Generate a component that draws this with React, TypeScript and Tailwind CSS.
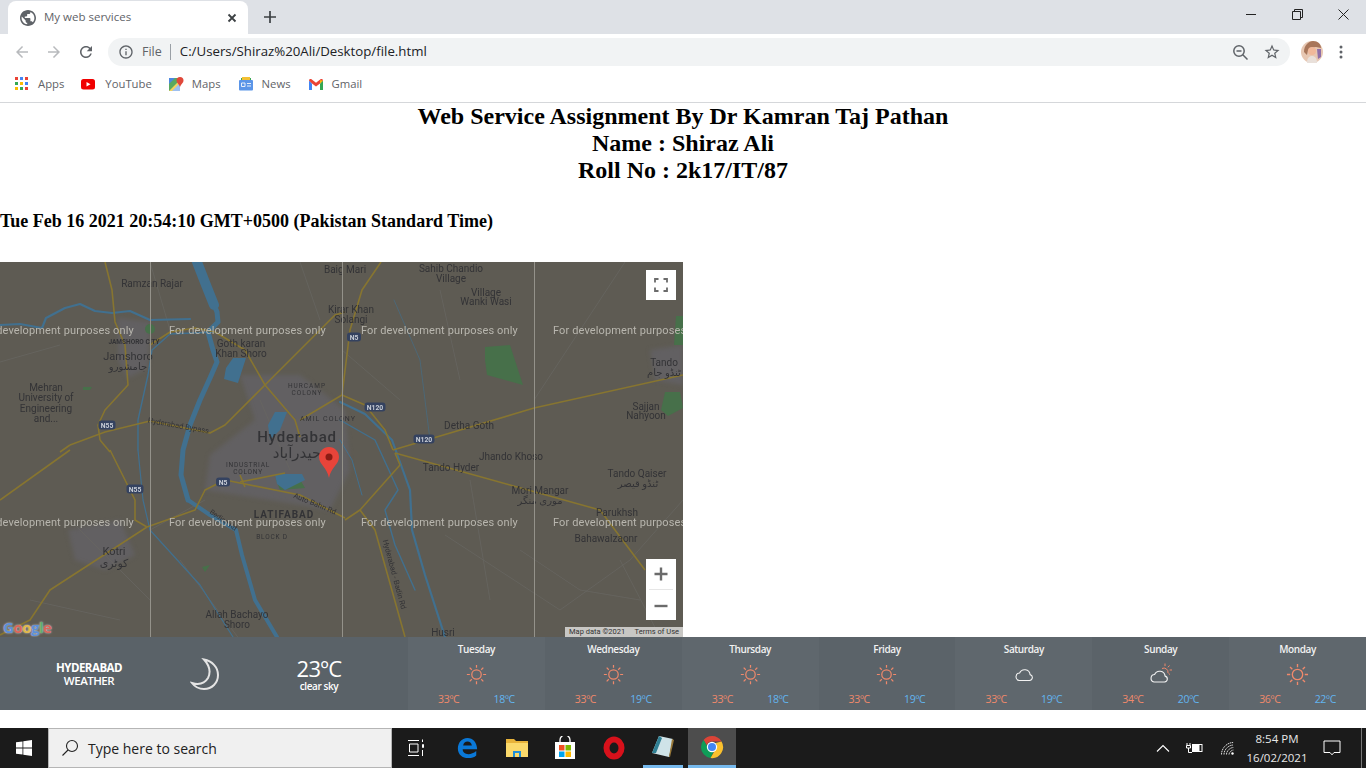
// App.tsx
import React from "react";

type Label = { t: string; x: number; y: number; s?: number; w?: number; r?: number; ls?: number };

const labels: Label[] = [
  { t: "Ramzan Rajar", x: 152, y: 287 },
  { t: "Baig Mari", x: 345, y: 273 },
  { t: "Sahib Chandio", x: 451, y: 272 },
  { t: "Village", x: 451, y: 282 },
  { t: "Village", x: 486, y: 296 },
  { t: "Wanki Wasi", x: 486, y: 305 },
  { t: "Kirar Khan", x: 351, y: 313 },
  { t: "Solangi", x: 351, y: 323 },
  { t: "Goth karan", x: 241, y: 347 },
  { t: "Khan Shoro", x: 241, y: 357 },
  { t: "JAMSHORO CITY", x: 134, y: 344, s: 6.5, w: 700 },
  { t: "Jamshoro", x: 128, y: 360, s: 11 },
  { t: "جامشورو", x: 128, y: 370, s: 10 },
  { t: "Mehran", x: 46, y: 391 },
  { t: "University of", x: 46, y: 401 },
  { t: "Engineering", x: 46, y: 412 },
  { t: "and...", x: 46, y: 422 },
  { t: "HURCAMP", x: 307, y: 388, s: 6.5, ls: 1 },
  { t: "COLONY", x: 307, y: 395, s: 6.5, ls: 1 },
  { t: "AMIL COLONY", x: 328, y: 421, s: 7, ls: 1 },
  { t: "Hyderabad", x: 297, y: 442, s: 15, w: 500, ls: 0.8 },
  { t: "حیدرآباد", x: 297, y: 458, s: 15 },
  { t: "Hyderabad Bypass", x: 178, y: 428, s: 7.5, r: 10 },
  { t: "Detha Goth", x: 469, y: 429 },
  { t: "Tando", x: 664, y: 366 },
  { t: "ٹنڈو جام", x: 664, y: 376 },
  { t: "Sajjan", x: 646, y: 410 },
  { t: "Nahyoon", x: 646, y: 419 },
  { t: "Jhando Khoso", x: 511, y: 460 },
  { t: "Tando Hyder", x: 451, y: 471 },
  { t: "Mori Mangar", x: 540, y: 494 },
  { t: "موری منگر", x: 540, y: 504 },
  { t: "Tando Qaiser", x: 637, y: 477 },
  { t: "ٹنڈو قیصر", x: 638, y: 487 },
  { t: "Parukhsh", x: 617, y: 516 },
  { t: "Bahawalzaonr", x: 606, y: 542 },
  { t: "INDUSTRIAL", x: 248, y: 467, s: 6.5, ls: 0.8 },
  { t: "COLONY", x: 248, y: 474, s: 6.5, ls: 0.8 },
  { t: "LATIFABAD", x: 284, y: 518, s: 10, w: 700, ls: 1 },
  { t: "BLOCK D", x: 272, y: 539, s: 6.5, ls: 0.8 },
  { t: "Auto Bahn Rd", x: 314, y: 506, s: 7.5, r: 22 },
  { t: "Bedian Rd", x: 222, y: 522, s: 7, r: 35 },
  { t: "Hyderabad - Badin Rd", x: 392, y: 575, s: 7.5, r: 75 },
  { t: "Kotri", x: 114, y: 555, s: 11 },
  { t: "کوٹری", x: 114, y: 567, s: 11 },
  { t: "Allah Bachayo", x: 237, y: 618 },
  { t: "Shoro", x: 237, y: 628 },
  { t: "Husri", x: 443, y: 636 },
];

const shields = [
  { t: "N55", x: 107, y: 425, w: 17 },
  { t: "N55", x: 135, y: 489, w: 17 },
  { t: "N5", x: 223, y: 482, w: 14 },
  { t: "N5", x: 354, y: 337, w: 14 },
  { t: "N120", x: 375, y: 407, w: 21 },
  { t: "N120", x: 424, y: 439, w: 21 },
];

const roads = [
  "M105 262L112 290L115 322L125 345L128 385L105 410L98 425L100 440",
  "M70 445L105 432L150 421L210 433L225 425L265 385L335 315L345 312",
  "M150 345L170 332L195 328L215 332L245 350L265 385L295 420L300 437",
  "M300 420L342 395L365 405L385 430L393 450",
  "M381 262L362 290L350 330L342 395",
  "M393 450L534 408L683 375",
  "M395 453L510 485L600 510L645 570",
  "M395 453L400 465L360 510L345 520",
  "M360 510L375 530L405 637",
  "M0 500L70 450",
  "M110 450L135 500L135 520L147 527",
  "M147 527L50 590L30 620L0 635",
  "M147 527L195 510L205 490L225 480L300 495L345 518",
  "M240 475L245 487M240 482L285 473",
  "M70 445L60 452M100 440L110 452",
];

const minorRoads = [
  "M0 362L60 345M150 262L170 330M260 400L290 470M300 262L320 320",
  "M342 350L400 400M440 290L460 380M534 400L625 262M520 550L580 590L640 600",
  "M445 535L560 610L630 560L683 500M150 530L205 500M180 560L240 640",
  "M620 560L660 637M470 480L490 600M30 600L120 620M70 520L150 600",
];

function Sun({ color = "#f0896b", size = 22 }: { color?: string; size?: number }) {
  return (
    <svg width={size} height={size} viewBox="0 0 24 24" fill="none" stroke={color} strokeWidth="1.4">
      <circle cx="12" cy="12" r="5.4" />
      <path d="M12 1v3.4M12 19.6V23M1 12h3.4M19.6 12H23M4.2 4.2l2.4 2.4M17.4 17.4l2.4 2.4M4.2 19.8l2.4-2.4M17.4 6.6l2.4-2.4" />
    </svg>
  );
}

function Cloud() {
  return (
    <svg width="20" height="18" viewBox="0 0 20 18" fill="none" stroke="#f2f2f2" strokeWidth="1.1">
      <path d="M5 15.5h10.5a3 3 0 0 0 .6-5.9A5.5 5.5 0 0 0 5.6 8 3.8 3.8 0 0 0 5 15.5z" />
    </svg>
  );
}

function SunCloud() {
  return (
    <svg width="24" height="22" viewBox="0 0 24 22" fill="none">
      <path d="M13 5.5a4.2 4.2 0 0 1 6 4.5M16 .5v2.6M20.5 2.5l-1.6 1.8M23 7h-2.4M21 11.5l-1.4-1" stroke="#f0896b" strokeWidth="1" />
      <path d="M5 19h10.5a3 3 0 0 0 .6-5.9A5.5 5.5 0 0 0 5.6 11.5 3.8 3.8 0 0 0 5 19z" stroke="#f2f2f2" strokeWidth="1.1" />
    </svg>
  );
}

function ChromeLogo({ size = 24 }: { size?: number }) {
  return (
    <svg width={size} height={size} viewBox="0 0 24 24">
      <path d="M12 1a11 11 0 0 1 9.53 5.5H12a5.5 5.5 0 0 0-5.2 3.7L3.6 5A11 11 0 0 1 12 1z" fill="#db4437" />
      <path d="M1 12a11 11 0 0 1 2.6-7l4.8 8.2a4.5 4.5 0 0 0 5.3 3.3L10.5 23A11 11 0 0 1 1 12z" fill="#0f9d58" />
      <path d="M21.5 6.5A11 11 0 0 1 10.5 23l4.8-8.2A4.5 4.5 0 0 0 15.6 8z" fill="#fbc02d" />
      <circle cx="12" cy="12" r="5.2" fill="#fff" />
      <circle cx="12" cy="12" r="4" fill="#4285f4" />
    </svg>
  );
}

function Bookmark({ icon, label, className }: { icon: React.ReactNode; label: string; className: string }) {
  return (
    <div className={"flex items-center " + className}>
      {icon}
      <span className="text-[11.300px] text-[#5f6368]">{label}</span>
    </div>
  );
}

const days = [
  { d: "Tuesday", hi: "33ºC", lo: "18ºC", i: "sun", bg: "bg-[#5f676d]" },
  { d: "Wednesday", hi: "33ºC", lo: "19ºC", i: "sun", bg: "bg-[#5b6369]" },
  { d: "Thursday", hi: "33ºC", lo: "18ºC", i: "sun", bg: "bg-[#5f676d]" },
  { d: "Friday", hi: "33ºC", lo: "19ºC", i: "sun", bg: "bg-[#5b6369]" },
  { d: "Saturday", hi: "33ºC", lo: "19ºC", i: "cloud", bg: "bg-[#5f676d]" },
  { d: "Sunday", hi: "34ºC", lo: "20ºC", i: "suncloud", bg: "bg-[#5b6369]" },
  { d: "Monday", hi: "36ºC", lo: "22ºC", i: "sun", bg: "bg-[#5f676d]" },
];

function MapPanel() {
  const marks = [-23, 169, 361, 553];
  return (
    <div className="relative w-[683px] h-[375px] overflow-hidden bg-[#5e5b53]">
      <svg className="absolute inset-0 blur-[0.5px]" width="683" height="375" viewBox="0 262 683 375">
        <g fill="#626062" className="blur-[2px]">
          <path d="M118 318L150 322L148 368L128 378L118 360z" />
          <path d="M240 375L300 375L345 410L350 470L330 510L270 500L205 490L210 455L255 420z" />
          <path d="M68 530L120 520L135 555L105 570L75 560z" />
          <path d="M650 350L683 345V385L655 380z" />
        </g>
        <g fill="#47704a">
          <path d="M485 347L510 345L523 385L487 375L485 360z" />
          <circle cx="150" cy="329" r="5" />
          <path d="M665 392H680L683 408L668 416L661 410z" />
          <path d="M676 316H683V345H674z" />
          <path d="M276 480L298 476L305 488L280 490z" />
          <path d="M83 387H92L90 390H83zM202 567L210 565L205 572z" />
        </g>
        <g fill="none" stroke="#676661" strokeWidth="0.8">
          {minorRoads.map((d) => (
            <path key={d} d={d} />
          ))}
        </g>
        <g fill="none" stroke="#41708f" strokeLinejoin="round" strokeLinecap="round">
          <path d="M197 262L208 290L217 312L218 322L208 332L213 350L217 362L210 378L200 400L190 425L183 450L181 475L188 500" strokeWidth="5" />
          <path d="M197 262L206 285L214 305" strokeWidth="10" />
          <path d="M188 500L210 515L236 530L242 555L255 600L277 637" strokeWidth="4" />
          <path d="M0 325L20 324L42 328L46 318L65 308L80 304L95 311L112 313L130 311L150 320L190 319" strokeWidth="2.2" />
          <path d="M138 450L143 500L150 530L200 585L233 637" strokeWidth="1.2" />
          <path d="M215 332L170 334L152 350L148 375L138 420L138 450" strokeWidth="1.4" />
          <path d="M340 402L365 414L392 440L410 490L412 530L425 575L445 637" strokeWidth="2.2" />
          <path d="M340 420L375 440L398 490L385 510L395 545L415 590" strokeWidth="1.4" />
          <path d="M340 440L352 460L362 495" strokeWidth="1" />
          <path d="M394 300L420 360L430 440" strokeWidth="0.6" />
        </g>
        <path d="M233 358L246 358L238 383L224 379L226 368z" fill="#41708f" />
        <path d="M275 412L287 412L280 430L270 440L268 425z" fill="#41708f" />
        <path d="M275 474L302 474L305 480L285 490L277 484z" fill="#41708f" />
        <g fill="none" stroke="#877530" strokeWidth="1.6" strokeLinejoin="round">
          {roads.map((d) => (
            <path key={d} d={d} />
          ))}
        </g>
        {shields.map((s) => (
          <g key={s.t + s.x}>
            <rect x={s.x - s.w / 2} y={s.y - 4.5} width={s.w} height="9" rx="3" fill="#344260" />
            <text x={s.x} y={s.y + 2.6} textAnchor="middle" fontSize="6.8" fontWeight="700" fill="#c8cdd6" fontFamily="Roboto, sans-serif">
              {s.t}
            </text>
          </g>
        ))}
        {labels.map((l) => (
          <text
            key={l.t + l.x + l.y}
            x={l.x}
            y={l.y}
            textAnchor="middle"
            fontSize={l.s ?? 10}
            fontWeight={l.w ?? 400}
            letterSpacing={l.ls ?? 0}
            fill="#333336"
            fontFamily="Roboto, 'DejaVu Sans', sans-serif"
            transform={l.r ? `rotate(${l.r} ${l.x} ${l.y})` : undefined}
          >
            {l.t}
          </text>
        ))}
        <path d="M150.5 262V637M342.5 262V637M534.5 262V637" stroke="#94928a" strokeWidth="1" />
        {[334, 526].map((y) =>
          marks.map((x) => (
            <text key={`${x}-${y}`} x={x} y={y} fontSize="11" letterSpacing="0.12" fill="#b8b6ae" fontFamily="Roboto, sans-serif">
              For development purposes only
            </text>
          ))
        )}
        <path d="M329 447c-5.6 0-10 4.500-10 10 0 7.500 8 10 10 21 2-11 10-13.500 10-21 0-5.500-4.400-10-10-10z" fill="#e8443a" />
        <circle cx="329" cy="457" r="3.500" fill="#8a1c14" />
      </svg>

      <button className="absolute left-[646px] top-[8px] w-[30px] h-[30px] bg-white flex items-center justify-center">
        <svg width="14" height="14" viewBox="0 0 14 14" fill="none" stroke="#6b6b6b" strokeWidth="1.800">
          <path d="M1 4.500V1H4.500M9.500 1H13V4.500M13 9.500V13H9.500M4.500 13H1V9.500" />
        </svg>
      </button>
      <div className="absolute left-[646px] top-[297px] w-[30px] h-[61px] bg-white flex flex-col items-center">
        <svg className="mt-[8px]" width="14" height="14" viewBox="0 0 14 14" fill="#6b6b6b">
          <path d="M5.800 0.500H8.200V5.800H13.500V8.200H8.200V13.500H5.800V8.200H0.500V5.800H5.800z" />
        </svg>
        <div className="mt-[8px] w-[24px] h-px bg-[#e6e6e6]" />
        <svg className="mt-[9px]" width="14" height="14" viewBox="0 0 14 14" fill="#6b6b6b">
          <path d="M0.500 5.800H13.500V8.200H0.500z" />
        </svg>
      </div>
      <div className="absolute left-[3px] top-[356px] text-[15px] leading-[18px] font-bold tracking-[-0.5px] font-['Open_Sans',sans-serif] [text-shadow:0_0_2px_#ddd]">
        <span className="text-[#5d8fd8]">G</span>
        <span className="text-[#d9665a]">o</span>
        <span className="text-[#e0b84c]">o</span>
        <span className="text-[#5d8fd8]">g</span>
        <span className="text-[#5fae6f]">l</span>
        <span className="text-[#d9665a]">e</span>
      </div>
      <div className="absolute right-0 bottom-0 h-[10px] w-[118px] bg-[#c8c7c4] flex items-center justify-between pl-[4px] pr-[4px] text-[7.500px] leading-[10px] text-[#333] font-['Roboto',sans-serif]">
        <span>Map data ©2021</span>
        <span>Terms of Use</span>
      </div>
    </div>
  );
}

function WeatherBar() {
  return (
    <div className="flex h-[73px] bg-[#5a6268] text-white font-['Open_Sans',sans-serif]">
      <div className="w-[178px] flex flex-col items-center justify-center text-[11.500px] leading-[13px] font-semibold tracking-[-0.5px]">
        <span className="font-bold">HYDERABAD</span>
        <span>WEATHER</span>
      </div>
      <div className="w-[54px] flex items-center justify-center">
        <svg width="30" height="32" viewBox="0 0 30 32" fill="none" stroke="#e4e4e4" strokeWidth="2">
          <path d="M14 1.500C22 3 28 9 28 17c0 8-6 14-14 14-5 0-9-2-12-6 7 2 13 0 16-5 3-6 1-13-4-18.500z" />
        </svg>
      </div>
      <div className="w-[174px] flex flex-col items-center justify-center">
        <span className="text-[22px] leading-[26px] tracking-[-0.6px]">23ºC</span>
        <span className="text-[10px] leading-[11px] font-semibold tracking-[-0.4px]">clear sky</span>
      </div>
      <div className="w-[2px]" />
      <div className="flex-1 grid grid-cols-7">
        {days.map((day) => (
          <div key={day.d} className={"flex flex-col items-center " + day.bg}>
            <span className="mt-[6px] text-[10px] leading-[13px] font-semibold tracking-[-0.4px] text-[#f2f2f2]">{day.d}</span>
            <div className="h-[24px] mt-[6px] flex items-center justify-center">
              {day.i === "sun" && <Sun size={day.d === "Monday" ? 23 : 21} />}
              {day.i === "cloud" && <Cloud />}
              {day.i === "suncloud" && <SunCloud />}
            </div>
            <div className="w-full mt-[7px] flex justify-between px-[30px] text-[10.500px] leading-[13px] tracking-[-0.3px]">
              <span className="text-[#f0896b]">{day.hi}</span>
              <span className="text-[#62b5f0]">{day.lo}</span>
            </div>
          </div>
        ))}
      </div>
    </div>
  );
}

function Taskbar() {
  return (
    <div className="flex h-[40px] bg-[#1b1b1b] items-stretch font-['Open_Sans',sans-serif]">
      <div className="w-[48px] flex items-center justify-center">
        <svg width="16" height="16" viewBox="0 0 16 16" fill="#fff">
          <path d="M0 2.300L6.500 1.400V7.600H0zM7.300 1.300L16 0V7.600H7.300zM0 8.400H6.500V14.600L0 13.700zM7.300 8.400H16V16L7.300 14.700z" />
        </svg>
      </div>
      <div className="w-[344px] bg-[#f0f0f0] border border-[#b5b5b5] flex items-center">
        <svg className="ml-[12px]" width="18" height="18" viewBox="0 0 18 18" fill="none" stroke="#222" strokeWidth="1.100">
          <circle cx="11" cy="7" r="5.500" />
          <path d="M7 11L1.500 16.500" />
        </svg>
        <span className="ml-[9px] pt-[1px] text-[14px] text-[#222]">Type here to search</span>
      </div>
      <div className="w-[48px] flex items-center justify-center">
        <svg width="18" height="18" viewBox="0 0 18 18" fill="none" stroke="#fff" strokeWidth="1">
          <path d="M1 1.500H12M1 16.500H12M2.500 5H11V13H2.500zM15.500 0.500V3M15.500 5.500H16.500V8.500H15.500zM15.500 11V17" />
        </svg>
      </div>
      <div className="w-[54px] flex items-center justify-center">
        <svg width="21" height="22" viewBox="0 0 24 25">
          <path
            fillRule="evenodd"
            d="M3 14H23C23 6 18 1 12 1 5 1 1 7 1 13c0 7 5 11 12 11 3.500 0 7-1 9-3v-5c-3 2.500-6 3.500-9 3.500-4 0-6.500-2-6.500-5.500zM7 9.500C7.500 6.500 9.500 5 12 5s4.500 1.500 5 4.500z"
            fill="#0a78d7"
          />
        </svg>
      </div>
      <div className="w-[46px] flex items-center justify-center">
        <svg width="22" height="20" viewBox="0 0 22 20">
          <path d="M0 1H8L10 3H22V19H0z" fill="#e8b33a" />
          <path d="M0 5H22V19H0z" fill="#fbd96b" />
          <path d="M7 13H15V19H13V15H9V19H7z" fill="#1f8fd8" />
        </svg>
      </div>
      <div className="w-[49px] flex items-center justify-center">
        <svg width="22" height="24" viewBox="0 0 22 24">
          <path d="M6 6V4a5 5 0 0 1 10 0V6" fill="none" stroke="#fff" strokeWidth="1.300" />
          <path d="M1 6H21V23H1z" fill="#fff" />
          <path d="M5 9H10.500V14.500H5z" fill="#f25022" />
          <path d="M11.500 9H17V14.500H11.500z" fill="#7fba00" />
          <path d="M5 15.500H10.500V21H5z" fill="#00a4ef" />
          <path d="M11.500 15.500H17V21H11.500z" fill="#ffb900" />
        </svg>
      </div>
      <div className="w-[49px] flex items-center justify-center">
        <svg width="24" height="24" viewBox="0 0 24 24">
          <ellipse cx="12" cy="12" rx="7.500" ry="8.500" fill="none" stroke="#d8111b" strokeWidth="6" />
        </svg>
      </div>
      <div className="w-[40px] mx-[5px] flex items-center justify-center border-b-[3px] border-[#76b9ed]">
        <svg width="24" height="24" viewBox="0 0 24 24">
          <path d="M8 1L22 4L18 22L1 18z" fill="#cfe3e8" />
          <path d="M8 1L11 3L5 18L1 18z" fill="#2f7f93" />
          <path d="M21 4L23 5L19 22L18 22z" fill="#9a7a3a" />
        </svg>
      </div>
      <div className="w-[48px] bg-[#4d4d4d] flex items-center justify-center border-b-[3px] border-[#76b9ed]">
        <ChromeLogo />
      </div>
      <div className="flex-1" />
      <div className="w-[14px] flex items-center justify-center mr-[15px]">
        <svg width="14" height="8" viewBox="0 0 14 8" fill="none" stroke="#fff" strokeWidth="1.100">
          <path d="M1 7.500L7 1.500L13 7.500" />
        </svg>
      </div>
      <div className="w-[18px] flex items-center justify-center mr-[18px]">
        <svg width="17" height="12" viewBox="0 0 17 12" fill="none" stroke="#fff" strokeWidth="1">
          <path d="M1 1V3.500M4 1V3.500M0.500 3.500H4.500V6H0.500zM2.500 6V10.500H6" />
          <rect x="6.500" y="2.500" width="9.500" height="7" />
          <rect x="7.500" y="3.500" width="5.500" height="5" fill="#fff" />
        </svg>
      </div>
      <div className="w-[14px] flex items-center justify-center mr-[12px]">
        <svg width="14" height="13" viewBox="0 0 14 13" fill="none" stroke="#f4f4f4" strokeWidth="0.900">
          <path d="M0.500 12.500C0.500 6 6 0.500 12.500 0.500M3 12.500C3 7.500 7.500 3 12.500 3M5.500 12.500C5.500 9 9 5.500 12.500 5.500M8 12.500C8 10.500 10.500 8 12.500 8" strokeDasharray="1.500 0.600" />
          <circle cx="11.500" cy="11.500" r="1.200" fill="#fff" stroke="none" />
        </svg>
      </div>
      <div className="w-[60px] flex flex-col items-center justify-center text-[11.500px] leading-[19px] text-[#e8e8e8]">
        <span>8:54 PM</span>
        <span>16/02/2021</span>
      </div>
      <div className="w-[54px] pr-[4px] flex items-center justify-center">
        <svg width="18" height="16" viewBox="0 0 18 16" fill="none" stroke="#fff" strokeWidth="1">
          <path d="M1 1H17V12.500H11L9 14.800L7 12.500H1z" />
        </svg>
      </div>
      <div className="w-px bg-[#777] mr-[4px]" />
    </div>
  );
}

export default function App() {
  return (
    <div className="w-[1366px] h-[768px] overflow-hidden bg-white flex flex-col">
      {/* tab strip */}
      <div className="h-[34px] bg-[#dee1e6] flex font-['Open_Sans',sans-serif]">
        <div className="ml-[8px] mt-[1px] w-[240px] h-[33px] bg-white rounded-t-[8px] flex items-center">
          <svg className="ml-[12px]" width="16" height="16" viewBox="2 2 20 20" fill="#5f6368">
            <path d="M12 2C6.480 2 2 6.480 2 12s4.480 10 10 10 10-4.480 10-10S17.520 2 12 2zm-1 17.930c-3.950-.490-7-3.850-7-7.930 0-.620.080-1.210.210-1.790L9 15v1c0 1.100.900 2 2 2v1.930zm6.900-2.540c-.260-.810-1-1.390-1.900-1.390h-1v-3c0-.550-.450-1-1-1H8v-2h2c.550 0 1-.450 1-1V7h2c1.100 0 2-.900 2-2v-.410c2.930 1.190 5 4.060 5 7.410 0 2.080-.800 3.970-2.100 5.390z" />
          </svg>
          <span className="ml-[8px] pb-[1px] text-[11.500px] text-[#5f6368]">My web services</span>
          <svg className="ml-auto mr-[11px]" width="10" height="10" viewBox="0 0 10 10" stroke="#3c4043" strokeWidth="1.800">
            <path d="M1.500 1.500L8.500 8.500M8.500 1.500L1.500 8.500" />
          </svg>
        </div>
        <svg className="ml-[15px] mt-[10px]" width="14" height="14" viewBox="0 0 14 14" stroke="#3c4043" strokeWidth="1.700">
          <path d="M7 1V13M1 7H13" />
        </svg>
        <div className="ml-auto flex">
          <div className="w-[46px] flex items-center justify-center pb-[6px]">
            <svg width="10" height="10" viewBox="0 0 10 10" stroke="#222" strokeWidth="1">
              <path d="M0 5.500H10" />
            </svg>
          </div>
          <div className="w-[46px] flex items-center justify-center pb-[6px]">
            <svg width="11" height="11" viewBox="0 0 11 11" fill="none" stroke="#222" strokeWidth="1">
              <path d="M0.500 2.500H8.500V10.500H0.500zM2.500 2.500V0.500H10.500V8.500H8.500" />
            </svg>
          </div>
          <div className="w-[46px] flex items-center justify-center pb-[6px]">
            <svg width="11" height="11" viewBox="0 0 11 11" stroke="#222" strokeWidth="1">
              <path d="M0.500 0.500L10.500 10.500M10.500 0.500L0.500 10.500" />
            </svg>
          </div>
        </div>
      </div>

      {/* toolbar */}
      <div className="h-[34px] pt-[2px] bg-white flex items-center font-['Open_Sans',sans-serif]">
        <svg className="ml-[13px]" width="18" height="18" viewBox="0 0 24 24" fill="#b8babd">
          <path d="M20 11H7.830l5.590-5.590L12 4l-8 8 8 8 1.410-1.410L7.830 13H20v-2z" />
        </svg>
        <svg className="ml-[14px]" width="18" height="18" viewBox="0 0 24 24" fill="#b8babd">
          <path d="M12 4l-1.410 1.410L16.170 11H4v2h12.170l-5.580 5.590L12 20l8-8z" />
        </svg>
        <svg className="ml-[14px]" width="18" height="18" viewBox="0 0 24 24" fill="#5f6368">
          <path d="M17.650 6.350C16.200 4.900 14.210 4 12 4c-4.420 0-7.990 3.580-7.990 8s3.570 8 7.990 8c3.730 0 6.840-2.550 7.730-6h-2.080c-.820 2.330-3.040 4-5.650 4-3.310 0-6-2.690-6-6s2.690-6 6-6c1.660 0 3.140.690 4.220 1.780L13 11h7V4l-2.350 2.350z" />
        </svg>
        <div className="ml-[13px] w-[1182px] h-[28px] rounded-full bg-[#f1f3f4] flex items-center">
          <svg className="ml-[10px]" width="16" height="16" viewBox="0 0 24 24" fill="#5f6368">
            <path d="M11 7h2v2h-2zm0 4h2v6h-2zm1-9C6.480 2 2 6.480 2 12s4.480 10 10 10 10-4.480 10-10S17.520 2 12 2zm0 18c-4.410 0-8-3.590-8-8s3.590-8 8-8 8 3.590 8 8-3.590 8-8 8z" />
          </svg>
          <span className="ml-[8px] text-[12.500px] text-[#5f6368]">File</span>
          <div className="ml-[8px] w-px h-[16px] bg-[#9aa0a6]" />
          <span className="ml-[9px] text-[13.250px] text-[#202124]">C:/Users/Shiraz%20Ali/Desktop/file.html</span>
          <svg className="ml-auto" width="17" height="17" viewBox="0 0 17 17" fill="none" stroke="#5f6368" strokeWidth="1.500">
            <circle cx="7" cy="7" r="5.200" />
            <path d="M4.500 7H9.500M10.800 10.800L15.500 15.500" />
          </svg>
          <svg className="ml-[14px] mr-[9px]" width="18" height="18" viewBox="0 0 24 24" fill="#5f6368">
            <path d="M22 9.240l-7.190-.620L12 2 9.190 8.630 2 9.240l5.460 4.730L5.820 21 12 17.270 18.180 21l-1.630-7.030L22 9.240zM12 15.400l-3.760 2.270 1-4.280-3.320-2.880 4.380-.380L12 6.100l1.710 4.040 4.380.380-3.320 2.880 1 4.280L12 15.400z" />
          </svg>
        </div>
        <svg className="ml-[11px]" width="22" height="22" viewBox="0 0 22 22">
          <circle cx="11" cy="11" r="11" fill="#e7c7b2" />
          <path d="M3 11C3 4 8 0 12 0c5 0 8 3 8 7l-5-1c-3 0-6 1-8 3l-1 5z" fill="#a8765a" />
          <circle cx="11" cy="10" r="4" fill="#f0b89a" />
          <path d="M6 22c0-5 2-7 5-7s5 2 5 7z" fill="#e9e0da" />
          <path d="M16 8h4v8l-3 2z" fill="#8f6fa8" />
        </svg>
        <svg className="ml-[15px]" width="6" height="14" viewBox="0 0 6 14" fill="#5f6368">
          <circle cx="3" cy="2" r="1.500" />
          <circle cx="3" cy="7" r="1.500" />
          <circle cx="3" cy="12" r="1.500" />
        </svg>
      </div>

      {/* bookmarks */}
      <div className="h-[35px] border-b border-[#d5d7da] bg-white flex items-center pb-[2px] font-['Open_Sans',sans-serif]">
        <Bookmark
          className="ml-[15px]"
          label="Apps"
          icon={
            <svg className="mr-[10px]" width="13" height="14" viewBox="0 0 13 14">
              <path d="M0 0h3v3H0z" fill="#ea4335" />
              <path d="M5 0h3v3H5z" fill="#4285f4" />
              <path d="M10 0h3v3h-3z" fill="#ea4335" />
              <path d="M0 5h3v3H0z" fill="#34a853" />
              <path d="M5 5h3v3H5z" fill="#fbbc05" />
              <path d="M10 5h3v3h-3z" fill="#4285f4" />
              <path d="M0 10h3v3H0z" fill="#fbbc05" />
              <path d="M5 10h3v3H5z" fill="#34a853" />
              <path d="M10 10h3v3h-3z" fill="#ea4335" />
            </svg>
          }
        />
        <Bookmark
          className="ml-[17px]"
          label="YouTube"
          icon={
            <svg className="mr-[10px]" width="14" height="11" viewBox="0 0 14 11">
              <rect width="14" height="10.500" rx="2.500" fill="#f00000" />
              <path d="M5.500 3L9.500 5.250L5.500 7.500z" fill="#fff" />
            </svg>
          }
        />
        <Bookmark
          className="ml-[17px]"
          label="Maps"
          icon={
            <svg className="mr-[8px]" width="15" height="15" viewBox="0 0 15 15">
              <path d="M0 1H11V14H0z" fill="#5aa85f" />
              <path d="M0 14L11 3V14z" fill="#f4d35e" />
              <path d="M0 1H6L0 7z" fill="#4b87e0" />
              <path d="M3 14L11 6V14z" fill="#9ec0f0" />
              <path d="M11 0a3.500 3.500 0 0 1 3.500 3.500C14.500 6 12 7 11 10 10 7 7.500 6 7.500 3.500A3.500 3.500 0 0 1 11 0z" fill="#e0483a" />
            </svg>
          }
        />
        <Bookmark
          className="ml-[18px]"
          label="News"
          icon={
            <svg className="mr-[9px]" width="14" height="14" viewBox="0 0 14 14">
              <path d="M2 1H12V6H2z" fill="#3aa757" />
              <path d="M3 0H11V3H3z" fill="#f3c033" />
              <rect x="0" y="3" width="14" height="10.500" rx="1" fill="#5b95e8" />
              <path d="M2.500 6H6V9.500H2.500zM8 6.500H12M8 9H12" stroke="#e8effa" strokeWidth="1" fill="none" />
            </svg>
          }
        />
        <Bookmark
          className="ml-[18px]"
          label="Gmail"
          icon={
            <svg className="mr-[9px]" width="14" height="11" viewBox="0 0 14 11">
              <path d="M0 1.500V11H3V4.500z" fill="#4285f4" />
              <path d="M14 1.500V11H11V4.500z" fill="#34a853" />
              <path d="M0 1.500C0 0 1.700-.400 2.800.500L7 3.800 11.200.500C12.300-.400 14 0 14 1.500L11 4.500 7 7.500 3 4.500z" fill="#ea4335" />
              <path d="M11 1.200L14 1.500 11 4.500z" fill="#fbbc05" />
            </svg>
          }
        />
      </div>

      {/* page */}
      <div className="flex-1 flex flex-col font-['Liberation_Serif',serif] text-black">
        <h2 className="text-center font-bold text-[24px] leading-[27px]">
          Web Service Assignment By Dr Kamran Taj Pathan
          <br />
          Name : Shiraz Ali
          <br />
          Roll No : 2k17/IT/87
        </h2>
        <h3 className="mt-[27px] mb-[30px] font-bold text-[18px] leading-[21px]">
          Tue Feb 16 2021 20:54:10 GMT+0500 (Pakistan Standard Time)
        </h3>
        <MapPanel />
        <WeatherBar />
      </div>

      <Taskbar />
    </div>
  );
}
